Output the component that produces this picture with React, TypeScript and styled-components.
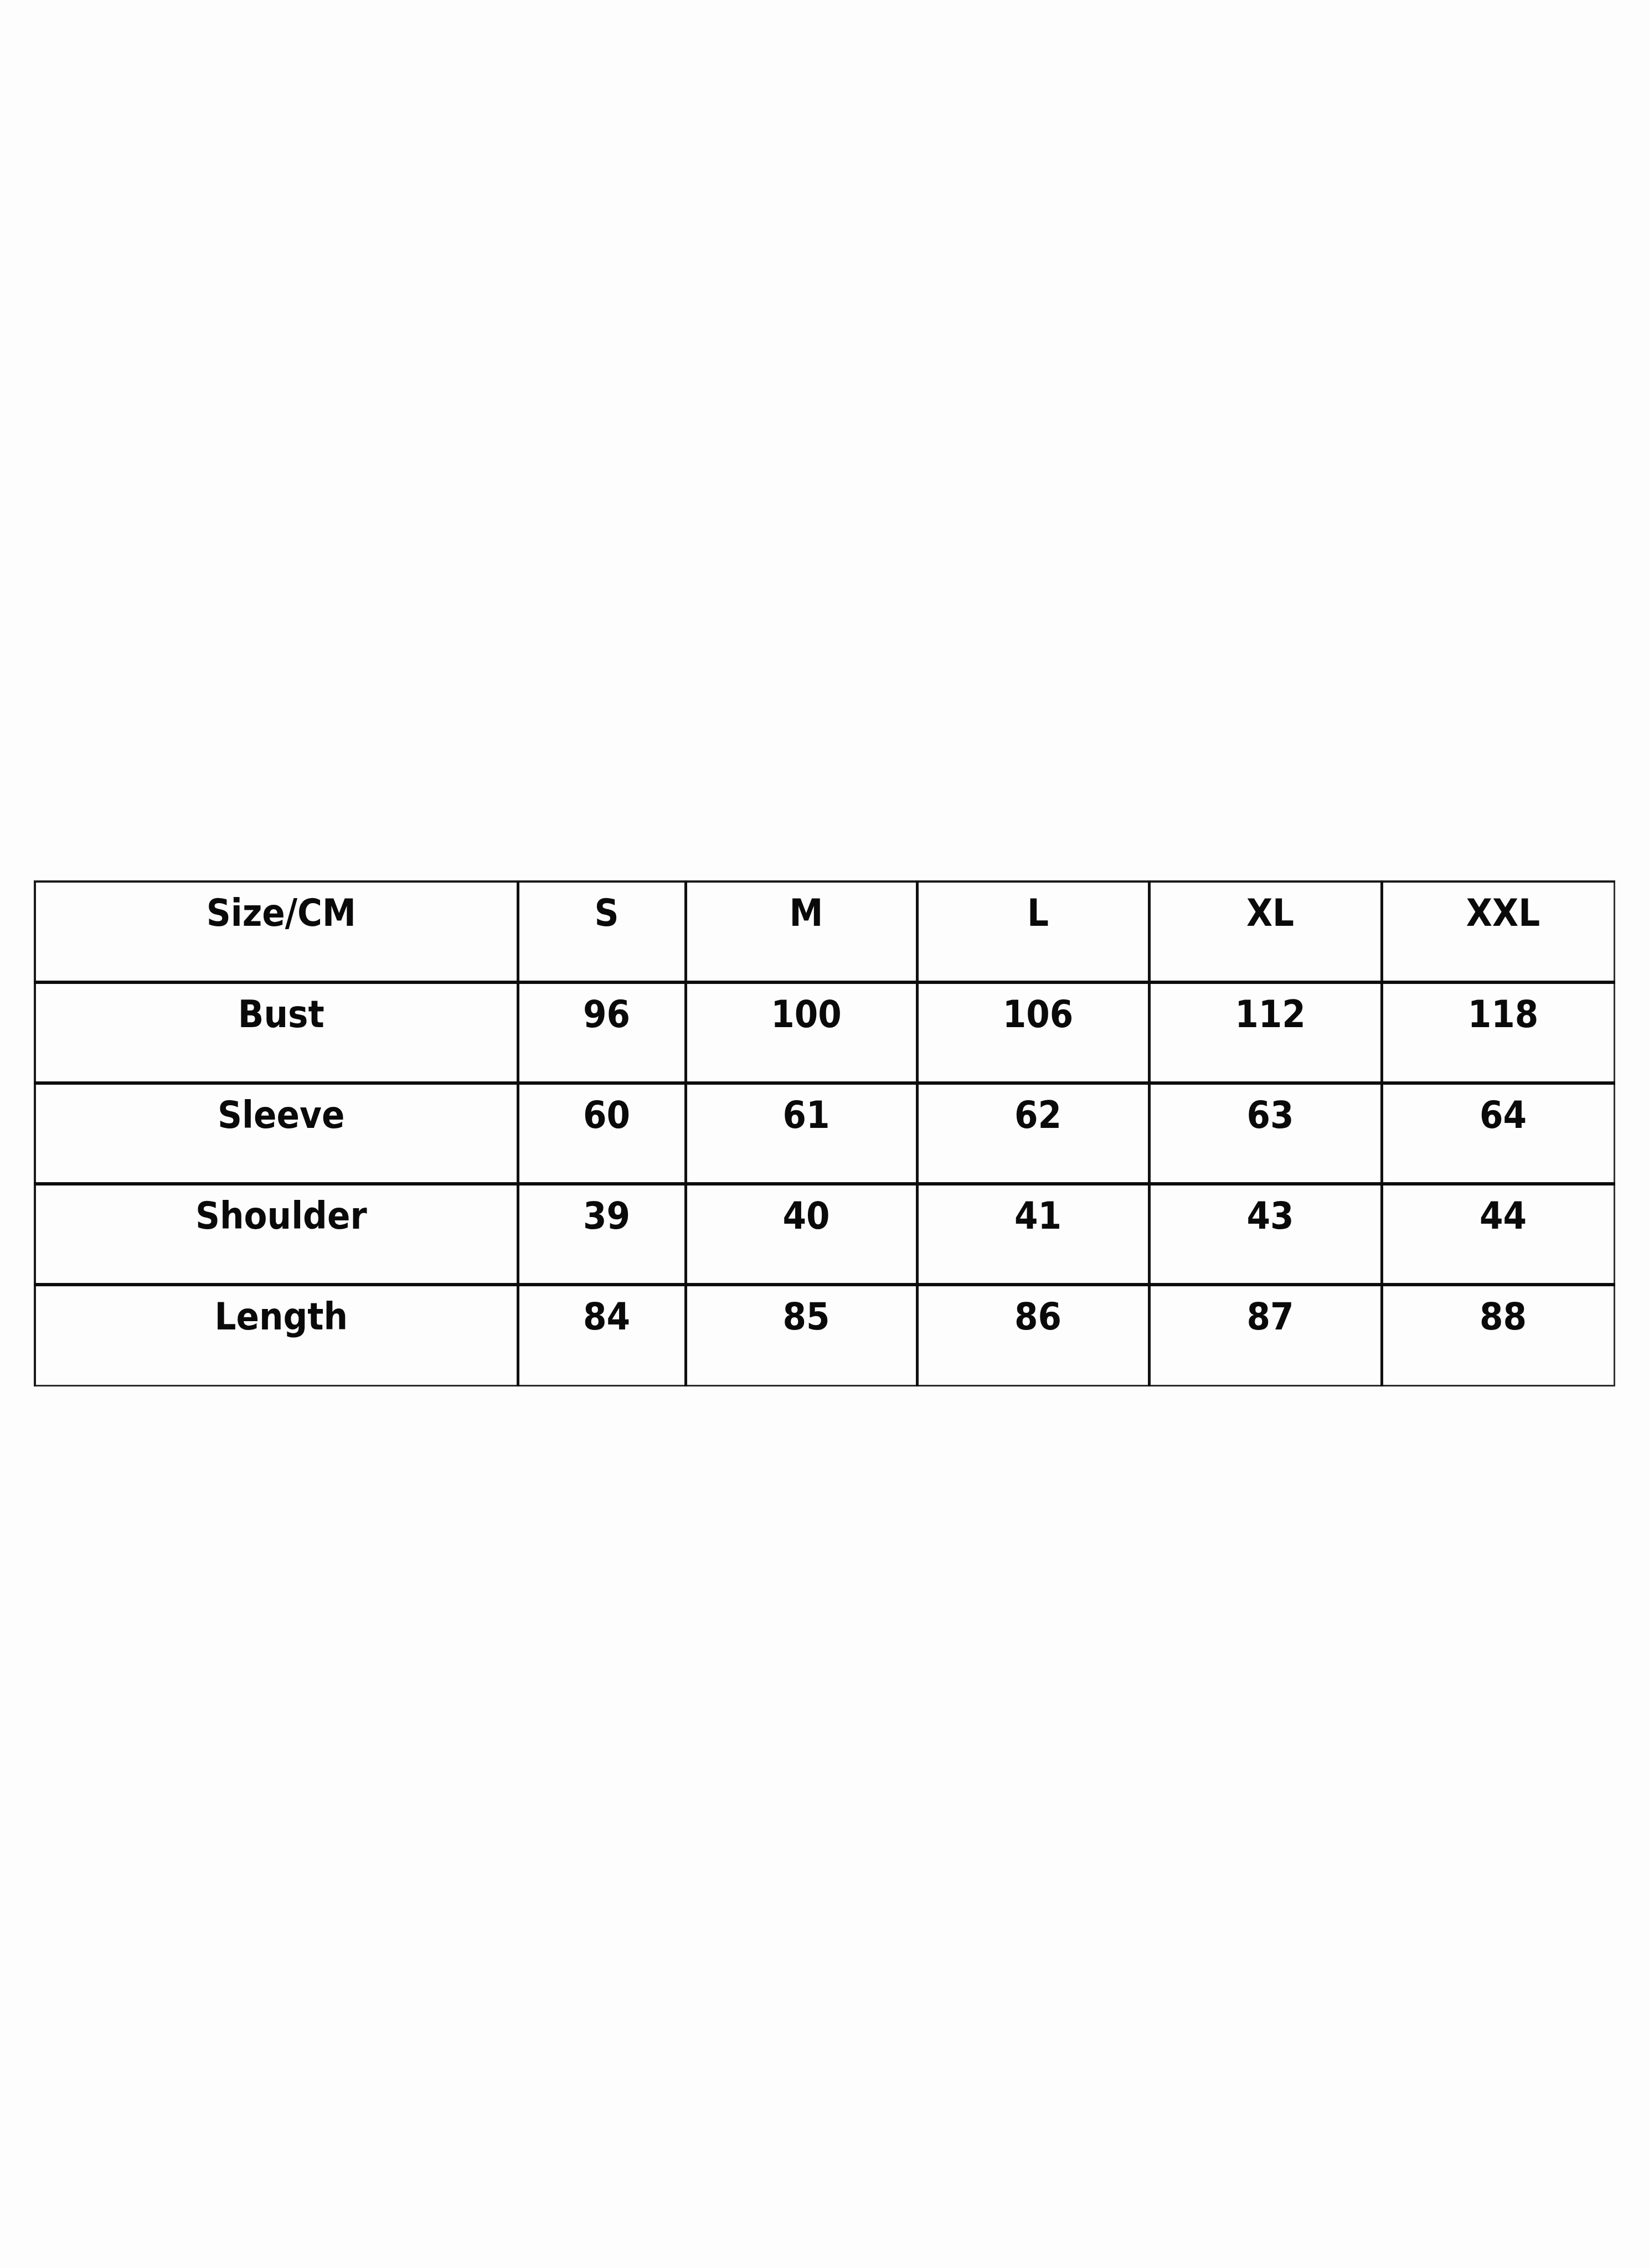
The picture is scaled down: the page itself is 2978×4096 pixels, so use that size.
import React from "react"
import styled, {createGlobalStyle} from "styled-components"

const GlobalStyle = createGlobalStyle`
  html, body {
    margin: 0;
    padding: 0;
    background: #fdfdfd;
  }
`

const columns = ["Size/CM", "S", "M", "L", "XL", "XXL"]

const rows = [
    ["Bust", "96", "100", "106", "112", "118"],
    ["Sleeve", "60", "61", "62", "63", "64"],
    ["Shoulder", "39", "40", "41", "43", "44"],
    ["Length", "84", "85", "86", "87", "88"],
]

const colWidths = [872, 303, 418, 419, 420, 420]

export default function App() {
    return (
        <Page>
            <GlobalStyle/>
            <SizeTable>
                <colgroup>
                    {colWidths.map((w, i) => <col key={i} style={{width: `${w}px`}}/>)}
                </colgroup>
                <tbody>
                    <Row>
                        {columns.map((c) => <Cell key={c}>{c}</Cell>)}
                    </Row>
                    {rows.map((r) => (
                        <Row key={r[0]}>
                            {r.map((v, i) => <Cell key={i}>{v}</Cell>)}
                        </Row>
                    ))}
                </tbody>
            </SizeTable>
        </Page>
    )
}

const Page = styled.div`
  min-height: 4096px;
  box-sizing: border-box;
  padding: 1590px 0 0 61px;
  background: #fdfdfd;
`

const SizeTable = styled.table`
  width: 2852px;
  table-layout: fixed;
  border-collapse: collapse;
  border-top: 4px solid #1a1a1a;
  border-bottom: 3px solid #2a2a2a;
  border-left: 4px solid #1a1a1a;
  border-right: 3px solid #333;
`

const Row = styled.tr`
  height: 182px;

  & + & {
    border-top: 6px solid #0d0d0d;
  }
`

const Cell = styled.td`
  box-sizing: border-box;
  padding: 21px 0 0 18px;
  vertical-align: top;
  text-align: center;
  border-right: 5px solid #111;
  font-family: "DejaVu Sans Condensed", "DejaVu Sans", sans-serif;
  font-weight: bold;
  font-size: 68px;
  line-height: 1;
  color: #0a0a0a;

  &:last-child {
    border-right: 3px solid #333;
  }
`
